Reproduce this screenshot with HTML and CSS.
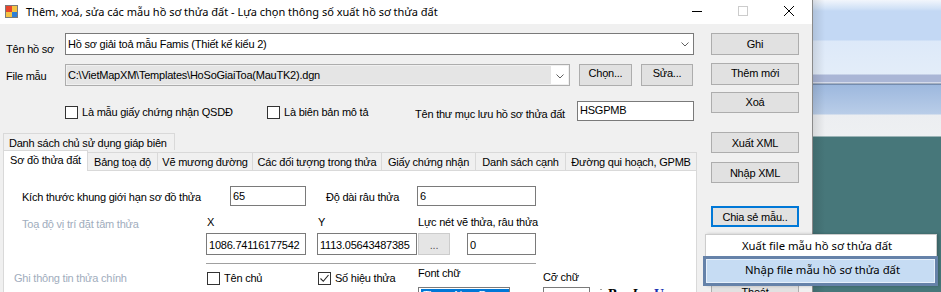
FILE: index.html
```html
<!DOCTYPE html>
<html>
<head>
<meta charset="utf-8">
<link rel="stylesheet" href="styles.css">
</head>
<body>
<div class="screen">
  <div class="window">
    <div class="titlebar">
      <svg class="app-icon" width="13" height="13" viewBox="0 0 13 13">
        <rect x="0.5" y="0.5" width="12" height="12" fill="#fff" stroke="#7a7a7a"/>
        <rect x="1" y="1" width="6" height="6" fill="#e8452c"/>
        <rect x="7" y="1" width="5" height="6" fill="#f5c342"/>
        <rect x="1" y="7" width="6" height="5" fill="#f5c342"/>
        <rect x="7" y="7" width="5" height="5" fill="#2f7fd6"/>
      </svg>
      <span class="title">Thêm, xoá, sửa các mẫu hồ sơ thửa đất - Lựa chọn thông số xuất hồ sơ thửa đất</span>
      <div class="caption">
        <span class="cap"><svg width="10" height="10" viewBox="0 0 10 10"><line x1="0" y1="5.5" x2="10" y2="5.5" stroke="#000"/></svg></span>
        <span class="cap"><svg width="10" height="10" viewBox="0 0 10 10"><rect x="0.5" y="0.5" width="9" height="9" fill="none" stroke="#cccccc"/></svg></span>
        <span class="cap"><svg width="10" height="10" viewBox="0 0 10 10"><path d="M0 0 L10 10 M10 0 L0 10" stroke="#000" stroke-width="1"/></svg></span>
      </div>
    </div>
    <div class="client">
      <div class="main">
        <div class="row row-name">
          <span class="lbl lbl-name">Tên hồ sơ</span>
          <div class="combo combo-name">
            <span class="combo-text">Hồ sơ giải toả mẫu Famis (Thiết kế kiểu 2)</span>
            <span class="combo-arrow"><svg width="8" height="5" viewBox="0 0 8 5"><path d="M0.5 0.5 L4 4 L7.5 0.5" fill="none" stroke="#606060"/></svg></span>
          </div>
        </div>
        <div class="row row-file">
          <span class="lbl lbl-file">File mẫu</span>
          <div class="combo combo-file">
            <span class="combo-text">C:\VietMapXM\Templates\HoSoGiaiToa(MauTK2).dgn</span>
            <span class="combo-arrow"><svg width="8" height="5" viewBox="0 0 8 5"><path d="M0.5 0.5 L4 4 L7.5 0.5" fill="none" stroke="#606060"/></svg></span>
          </div>
          <span class="btn btn-chon">Chọn...</span>
          <span class="btn btn-sua">Sửa...</span>
        </div>
        <div class="row row-opts">
          <span class="chk-group grp-qsdd"><span class="chk"></span><span class="chk-lbl">Là mẫu giấy chứng nhận QSDĐ</span></span>
          <span class="chk-group grp-bb"><span class="chk"></span><span class="chk-lbl">Là biên bản mô tả</span></span>
          <span class="lbl lbl-folder">Tên thư mục lưu hồ sơ thửa đất</span>
          <span class="tbox tbox-folder">HSGPMB</span>
        </div>
        <div class="tabrow1">
          <span class="tab tab-top">Danh sách chủ sử dụng giáp biên</span>
        </div>
        <div class="tabrow2">
          <span class="tab tab-sel t1">Sơ đồ thửa đất</span>
          <span class="tab t2">Bảng toạ độ</span>
          <span class="tab t3">Vẽ mương đường</span>
          <span class="tab t4">Các đối tượng trong thửa</span>
          <span class="tab t5">Giấy chứng nhận</span>
          <span class="tab t6">Danh sách cạnh</span>
          <span class="tab t7 tab-last">Đường qui hoạch, GPMB</span>
        </div>
        <div class="panel">
          <div class="prow prow-a">
            <span class="lbl pl-size">Kích thước khung giới hạn sơ đồ thửa</span>
            <span class="tbox tb-size">65</span>
            <span class="lbl pl-len">Độ dài râu thửa</span>
            <span class="tbox tb-len">6</span>
          </div>
          <div class="prow prow-b">
            <span class="lbl lbl-dim pl-coord">Toạ độ vị trí đặt tâm thửa</span>
            <span class="lbl pl-x">X</span>
            <span class="lbl pl-y">Y</span>
            <span class="lbl pl-pen">Lực nét vẽ thửa, râu thửa</span>
          </div>
          <div class="prow prow-c">
            <span class="tbox tb-x">1086.74116177542</span>
            <span class="tbox tb-y">1113.05643487385</span>
            <span class="btn btn-dots">...</span>
            <span class="tbox tb-pen">0</span>
          </div>
          <div class="sep"></div>
          <div class="prow prow-d">
            <span class="lbl lbl-dim pl-info">Ghi thông tin thửa chính</span>
            <span class="chk-group grp-owner"><span class="chk"></span><span class="chk-lbl">Tên chủ</span></span>
            <span class="chk-group grp-num"><span class="chk chk-on"><svg width="11" height="11" viewBox="0 0 11 11"><path d="M1.5 5.5 L4.3 8.3 L9.5 2" fill="none" stroke="#222" stroke-width="1.1"/></svg></span><span class="chk-lbl">Số hiệu thửa</span></span>
            <span class="lbl pl-font">Font chữ</span>
            <span class="lbl pl-fsize">Cỡ chữ</span>
          </div>
          <div class="prow prow-e">
            <span class="tbox tb-font"><span class="sel">Times New Roman</span></span>
            <span class="tbox tb-fsize">8.5</span>
            <span class="toolbar"><span class="grip"></span><b class="tb-b">B</b><i class="tb-i">I</i><u class="tb-u">U</u></span>
          </div>
        </div>
      </div>
      <div class="side">
        <span class="btn sbtn s-ghi">Ghi</span>
        <span class="btn sbtn s-them">Thêm mới</span>
        <span class="btn sbtn s-xoa">Xoá</span>
        <span class="btn sbtn s-xuat">Xuất XML</span>
        <span class="btn sbtn s-nhap">Nhập XML</span>
        <span class="btn sbtn s-chia">Chia sẻ mẫu..</span>
        <span class="btn sbtn s-thoat">Thoát</span>
      </div>
    </div>
  </div>
  <div class="desktop"></div>
  <div class="ctx-menu">
    <div class="menu-item">Xuất file mẫu hồ sơ thửa đất</div>
    <div class="menu-item menu-item-hot">Nhập file mẫu hồ sơ thửa đất</div>
  </div>
</div>
</body>
</html>
```
FILE: styles.css
```css
* { box-sizing: border-box; }
html, body { margin: 0; padding: 0; }
body {
  width: 941px; height: 292px; overflow: hidden;
  font-family: "Liberation Sans", Arial, sans-serif;
  font-size: 11px; letter-spacing: -0.22px; color: #000; background: #47777a;
}
.screen { position: relative; display: flex; width: 941px; height: 292px; }

/* window */
.window {
  width: 813px; height: 292px; flex: none;
  display: flex; flex-direction: column;
  background: #f0f0f0; border-right: 1px solid #8a8a8a;
}
.titlebar { height: 24px; flex: none; background: #fff; display: flex; align-items: flex-start; }
.app-icon { margin: 5px 0 0 5px; flex: none; }
.title {
  font-family: "Noto Sans", sans-serif; font-size: 11px; line-height: 16px; letter-spacing: 0;
  margin: 4px 0 0 8px; white-space: nowrap; color: #000;
}
.caption { margin-left: auto; display: flex; }
.cap { width: 46px; height: 22px; display: flex; align-items: center; justify-content: center; }

.client { flex: 1; display: flex; min-height: 0; }
.main { width: 700px; flex: none; display: flex; flex-direction: column; }
.side { width: 112px; flex: none; display: flex; flex-direction: column; padding-left: 11px; }

.row { display: flex; align-items: flex-start; flex: none; }
.lbl { line-height: 13px; height: 13px; white-space: nowrap; flex: none; }

/* combo boxes */
.combo { display: flex; border: 1px solid #7a7a7a; background: #fff; flex: none; }
.combo-text { line-height: 13px; padding-left: 2px; white-space: nowrap; flex: 1; overflow: hidden; }
.combo-arrow { width: 17px; display: flex; justify-content: center; flex: none; }

.row-name { margin-top: 9px; height: 22px; }
.lbl-name { margin: 10px 0 0 6px; width: 59px; }
.combo-name { width: 629px; height: 22px; padding-top: 4px; }
.combo-name .combo-arrow { padding-top: 4px; }

.row-file { margin-top: 9px; height: 22px; }
.lbl-file { margin: 6px 0 0 6px; width: 59px; }
.combo-file { width: 505px; height: 22px; background: #f0f0f0; border-color: #adadad; }
.combo-file .combo-text { background: #e5e5e5; padding-top: 3px; margin: 1px 0 1px 1px; padding-left: 1px; }
.combo-file .combo-arrow { padding-top: 8px; background: #fff; margin: 1px 1px 1px 0; }

/* buttons */
.btn {
  display: flex; justify-content: center; align-items: flex-start;
  background: #e1e1e1; border: 1px solid #adadad;
  line-height: 13px; white-space: nowrap; flex: none;
}
.btn-chon { margin-left: 9px; width: 53px; height: 22px; padding-top: 2px; }
.btn-sua { margin-left: 9px; width: 52px; height: 22px; padding-top: 2px; }

.sbtn { width: 88px; height: 22px; padding-top: 4px; }
.s-ghi { margin-top: 9px; }
.s-them { margin-top: 8px; padding-top: 3px; }
.s-xoa { margin-top: 7px; height: 21px; padding-top: 3px; }
.s-xuat { margin-top: 19px; height: 21px; padding-top: 4px; }
.s-nhap { margin-top: 9px; height: 21px; padding-top: 4px; }
.s-chia { margin-top: 23px; height: 21px; border: 2px solid #0078d7; padding-top: 3px; }
.s-thoat { margin-top: 58px; height: 22px; padding-top: 0; }

/* checkbox */
.chk-group { display: flex; align-items: flex-start; flex: none; }
.chk {
  width: 13px; height: 13px; border: 1px solid #333; background: #fff; flex: none;
  display: flex; align-items: center; justify-content: center;
}
.chk-lbl { line-height: 13px; margin-left: 4px; white-space: nowrap; }

.row-opts { margin-top: 15px; height: 20px; }
.grp-qsdd { margin: 5px 0 0 65px; width: 202px; }
.grp-bb { margin-top: 5px; width: 148px; }
.lbl-folder { margin-top: 7px; width: 162px; }
.tbox {
  display: block; border: 1px solid #7a7a7a; background: #fff;
  line-height: 13px; padding-left: 2px; white-space: nowrap; overflow: hidden; flex: none;
}
.tbox-folder { width: 117px; height: 20px; padding-top: 2px; }

/* tabs */
.tabrow1 { margin: 12px 0 0 3px; height: 17px; display: flex; flex: none; }
.tab {
  display: block; border: 1px solid #d9d9d9; border-right: none; border-bottom: none;
  background: #f0f0f0; line-height: 13px; text-align: center; white-space: nowrap; flex: none;
}
.tab-top { width: 172px; height: 17px; padding-top: 3px; border-right: 1px solid #d9d9d9; text-align: left; padding-left: 5px; }
.tabrow2 { margin-left: 3px; height: 20px; display: flex; align-items: flex-end; flex: none; position: relative; z-index: 2; }
.tabrow2 .tab { height: 18px; padding-top: 3px; }
.tabrow2 .tab-sel { height: 21px; margin-bottom: -1px; background: #fff; padding-top: 3px; border-right: 1px solid #d9d9d9; }
.t1 { width: 85px; }
.t2 { width: 69px; border-left: none !important; }
.t3 { width: 95px; }
.t4 { width: 129px; }
.t5 { width: 94px; }
.t6 { width: 90px; }
.t7 { width: 132px; }
.tab-last { border-right: 1px solid #d9d9d9 !important; }

.panel {
  flex: 1; margin-left: 3px; width: 694px; background: #fff;
  border: 1px solid #d9d9d9; border-bottom: none;
  display: flex; flex-direction: column;
}
.prow { display: flex; align-items: flex-start; flex: none; }
.prow-a { margin-top: 15px; height: 20px; }
.pl-size { margin: 5px 0 0 18px; width: 208px; }
.tb-size { width: 76px; height: 20px; padding-top: 3px; }
.pl-len { margin: 5px 0 0 20px; width: 91px; }
.tb-len { width: 119px; height: 20px; padding-top: 3px; }

.prow-b { margin-top: 10px; height: 13px; }
.lbl-dim { color: #9fadbd; }
.pl-coord { margin: 2px 0 0 18px; width: 185px; }
.pl-x { width: 111px; }
.pl-y { width: 100px; }

.prow-c { margin-top: 4px; height: 22px; }
.tb-x { margin-left: 202px; width: 100px; height: 22px; padding-top: 5px; }
.tb-y { margin-left: 11px; width: 100px; height: 22px; padding-top: 5px; }
.btn-dots { margin-left: 1px; width: 32px; height: 22px; padding-top: 5px; background: #e5e5e5; border-color: #cccccc; color: #555; }
.tb-pen { margin-left: 17px; width: 69px; height: 22px; padding-top: 5px; }

.sep { flex: none; margin: 8px 0 0 202px; width: 330px; height: 1px; background: #a0a0a0; }

.prow-d { margin-top: 8px; height: 14px; }
.pl-info { margin: 0 0 0 10px; width: 193px; }
.grp-owner { margin-top: 0; width: 111px; }
.grp-num { margin-top: 0; width: 100px; }
.pl-font { margin-top: -5px; width: 125px; }
.pl-fsize { margin-top: -1px; }

.prow-e { margin-top: 1px; height: 20px; }
.tb-font { margin-left: 414px; width: 92px; height: 20px; padding: 1px 0 0 2px; border-color: #7a7a7a; }
.sel { background: #0078d7; color: #fff; display: inline-block; padding: 0 2px; }
.tb-fsize { margin-left: 33px; width: 47px; height: 20px; padding-top: 2px; }
.toolbar { display: flex; align-items: flex-start; margin-left: 10px; font-family: "Liberation Serif", serif; font-size: 14px; line-height: 16px; letter-spacing: 0; }
.grip { width: 2px; height: 12px; margin: 2px 6px 0 0; background: repeating-linear-gradient(#a0a0a0 0 1px, transparent 1px 3px); }
.tb-b { margin-top: 0; width: 24px; }
.tb-i { width: 22px; font-weight: bold; }
.tb-u { color: #1a2fb0; font-weight: bold; }

/* desktop */
.desktop {
  flex: 1;
  background:
    linear-gradient(90deg, rgba(0,0,0,0.10), rgba(0,0,0,0) 12px),
    linear-gradient(180deg,
      #f2f6fc 0px, #cfe0f6 9px, #c3d8f4 11px, #c3d8f4 40px,
      #dde9f9 41px, #e3edf9 74px,
      #aab6d6 75px, #aab6d6 82px, #ffffff 83px, #4a5f80 84px,
      #9db8de 85px, #b9cde8 114px,
      #eceef1 115px, #eef0f2 136px,
      #47777a 137px, #47777a 292px);
}

/* context menu */
.ctx-menu {
  position: absolute; left: 705px; top: 234px; width: 232px; height: 52px;
  background: #fff; border: 1px solid #cccccc; border-bottom: none;
  font-family: "Noto Sans", sans-serif; font-size: 11.3px; letter-spacing: 0;
  box-shadow: 2px 0 3px rgba(0,0,0,0.2);
  z-index: 10;
}
.menu-item { height: 21px; line-height: 22px; padding-left: 36px; white-space: nowrap; }
.menu-item-hot {
  margin: 0 -2px 0 -3px; height: 30px; padding-left: 39px; line-height: 22px;
  border: 3px solid #6582a9; background: #c6dcf3;
  box-shadow: inset 0 0 0 1px #e6f0fb;
}
```
